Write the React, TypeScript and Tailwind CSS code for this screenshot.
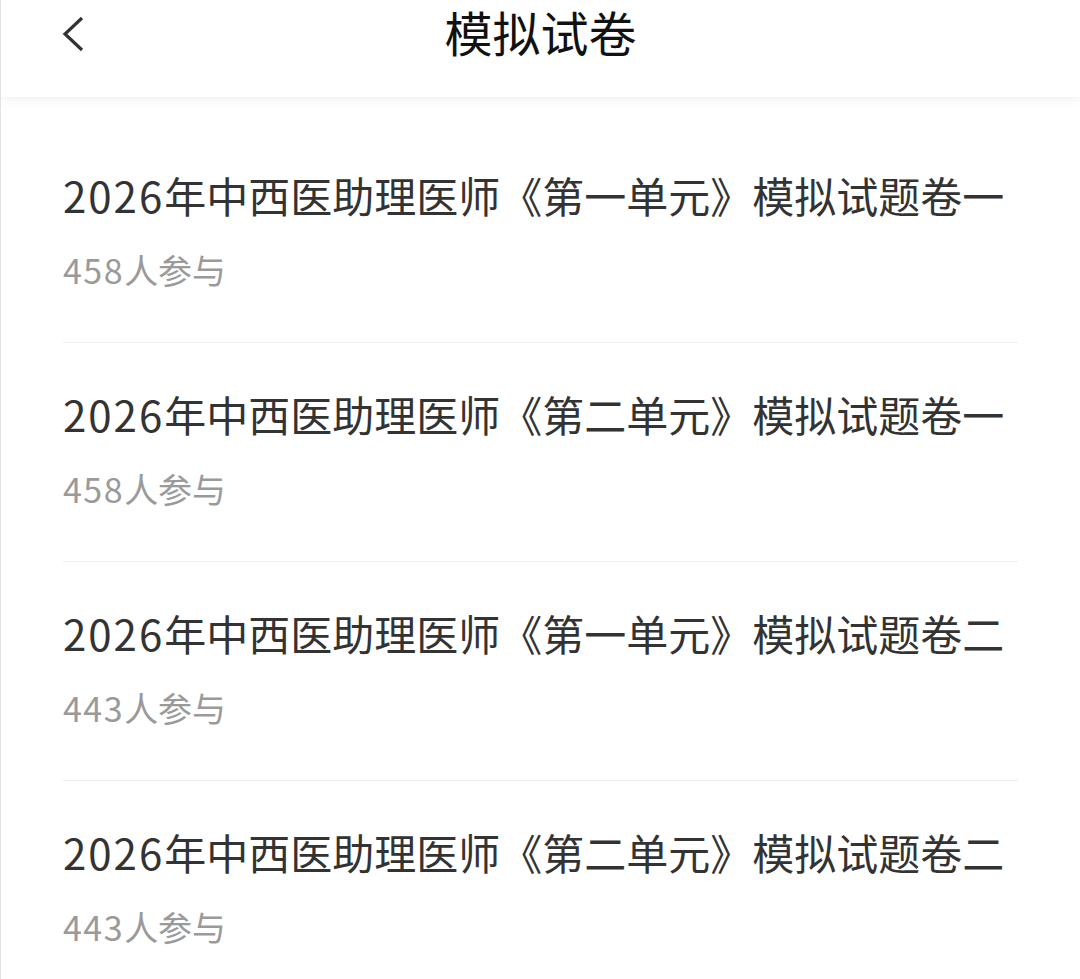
const papers = [
  { year: "2026", title: "年中西医助理医师《第一单元》模拟试题卷一", count: "458" },
  { year: "2026", title: "年中西医助理医师《第二单元》模拟试题卷一", count: "458" },
  { year: "2026", title: "年中西医助理医师《第一单元》模拟试题卷二", count: "443" },
  { year: "2026", title: "年中西医助理医师《第二单元》模拟试题卷二", count: "443" },
];

export default function App() {
  return (
    <div
      className="w-full h-[979px] bg-white border-l border-[#e2e2e2] overflow-hidden"
      style={{ fontFamily: '"Noto Sans CJK SC", "Noto Sans", sans-serif' }}
    >
      {/* Header */}
      <header className="relative h-[97px] bg-white shadow-[0_3px_10px_rgba(0,0,0,0.06)] z-10">
        <button className="absolute left-[60px] top-[14px] w-[26px] h-[40px]">
          <svg width="26" height="40" viewBox="0 0 26 40" fill="none">
            <path d="M21 4 L4 20 L21 36" stroke="#333" strokeWidth="3.2" />
          </svg>
        </button>
        <h1 className="pt-[2px] text-center text-[48px] leading-[58px] text-[#111]">模拟试卷</h1>
      </header>

      {/* List */}
      <ul className="px-[62px] pt-[27px]">
        {papers.map((p, i) => (
          <li key={i} className="pt-[50px] pb-[55px] border-b border-[#eeeeee]">
            <div className="text-[42px] leading-[42px] text-[#333] whitespace-nowrap">
              <span className="tracking-[2px]">{p.year}</span>
              {p.title}
            </div>
            <div className="mt-[37px] text-[34px] leading-[34px] text-[#9a9a9a]">
              <span className="tracking-[1.5px]">{p.count}</span>人参与
            </div>
          </li>
        ))}
      </ul>
    </div>
  );
}
